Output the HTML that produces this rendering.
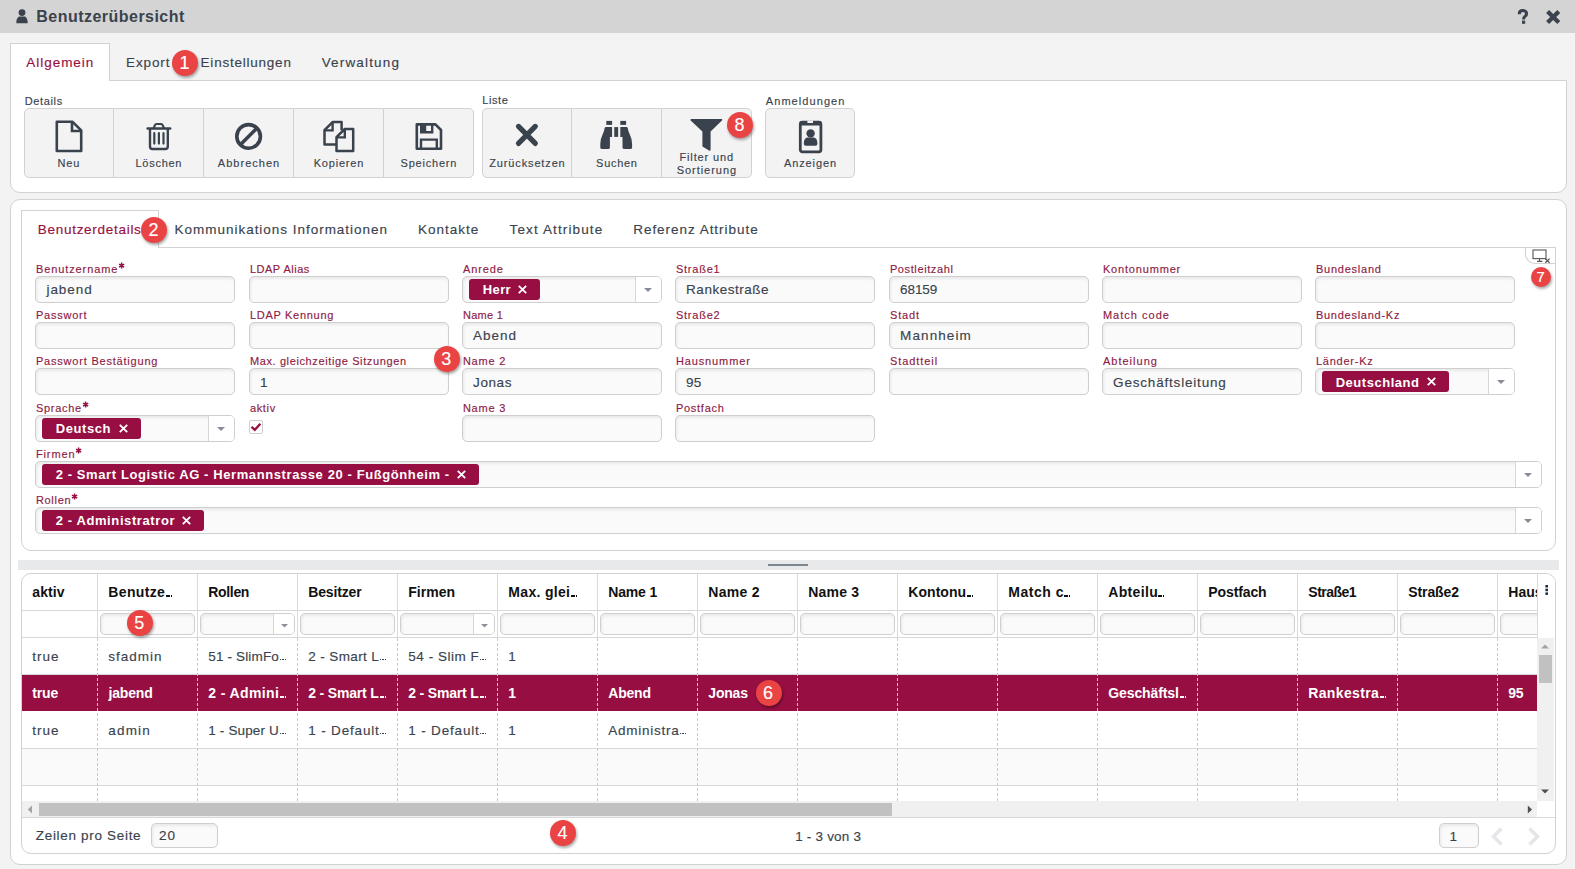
<!DOCTYPE html><html><head><meta charset="utf-8"><style>
html,body{margin:0;padding:0}
body{width:1575px;height:869px;overflow:hidden;position:relative;background:#f3f3f3;font-family:"Liberation Sans",sans-serif}
.t{position:absolute;white-space:pre;line-height:1;-webkit-text-stroke:0.15px currentColor}
svg{overflow:visible}
</style></head><body>
<div style="position:absolute;left:0px;top:0px;width:1575px;height:33px;background:#d4d4d4"></div>
<svg style="position:absolute;left:16px;top:9px" width="12" height="15" viewBox="0 0 12 15"><circle cx="6" cy="3.6" r="3.4" fill="#3a434d"/><path d="M0.3 14.2 C0.3 9.8 2 7.6 3.6 7.6 L8.4 7.6 C10 7.6 11.7 9.8 11.7 14.2 Z" fill="#3a434d"/></svg>
<div class="t" style="left:36.30px;top:9px;font-size:16px;font-weight:bold;-webkit-text-stroke:0;color:#3a434d;letter-spacing:0.472px;">Benutzerübersicht</div>
<svg style="position:absolute;left:1516.6px;top:9px" width="12" height="15" viewBox="0 0 12 15"><path d="M2.2 5.2 C2.2 2.6 3.8 1.6 5.8 1.6 C8.2 1.6 9.6 2.9 9.6 4.7 C9.6 7.4 6.6 7.5 6.6 9.8 V10.6" fill="none" stroke="#3a434d" stroke-width="3"/><rect x="5" y="11.6" width="3.2" height="3.2" fill="#3a434d"/></svg>
<svg style="position:absolute;left:1545px;top:9px" width="16" height="16" viewBox="0 0 16 16"><path d="M2.6 2.4 L13.8 13.6 M13.8 2.4 L2.6 13.6" stroke="#3a434d" stroke-width="4.2"/></svg>
<div style="position:absolute;left:10px;top:80px;width:1557px;height:113px;box-sizing:border-box;background:#fff;border:1px solid #d2d2d2;border-radius:0 0 10px 10px"></div>
<div style="position:absolute;left:10px;top:43px;width:100px;height:38px;box-sizing:border-box;background:#fff;border:1px solid #d2d2d2;border-bottom:none"></div>
<div class="t" style="left:26.30px;top:56px;font-size:13.5px;color:#970f42;letter-spacing:0.963px;">Allgemein</div>
<div class="t" style="left:126.10px;top:56px;font-size:13.5px;color:#3a434d;letter-spacing:0.860px;">Export</div>
<div class="t" style="left:200.60px;top:56px;font-size:13.5px;color:#3a434d;letter-spacing:0.771px;">Einstellungen</div>
<div class="t" style="left:321.70px;top:56px;font-size:13.5px;color:#3a434d;letter-spacing:1.156px;">Verwaltung</div>
<div class="t" style="left:24.70px;top:96px;font-size:11px;color:#3a434d;letter-spacing:0.650px;">Details</div>
<div class="t" style="left:482.30px;top:95px;font-size:11px;color:#3a434d;letter-spacing:0.562px;">Liste</div>
<div class="t" style="left:765.80px;top:96px;font-size:11px;color:#3a434d;letter-spacing:1.070px;">Anmeldungen</div>
<div style="position:absolute;left:24px;top:108px;width:450px;height:70px;box-sizing:border-box;background:#f3f3f3;border:1px solid #d2d2d2;border-radius:5px"></div>
<div style="position:absolute;left:113px;top:109px;width:1px;height:68px;background:#d2d2d2"></div>
<div style="position:absolute;left:203px;top:109px;width:1px;height:68px;background:#d2d2d2"></div>
<div style="position:absolute;left:293px;top:109px;width:1px;height:68px;background:#d2d2d2"></div>
<div style="position:absolute;left:383px;top:109px;width:1px;height:68px;background:#d2d2d2"></div>
<div style="position:absolute;left:482px;top:108px;width:270px;height:70px;box-sizing:border-box;background:#f3f3f3;border:1px solid #d2d2d2;border-radius:5px"></div>
<div style="position:absolute;left:571px;top:109px;width:1px;height:68px;background:#d2d2d2"></div>
<div style="position:absolute;left:661px;top:109px;width:1px;height:68px;background:#d2d2d2"></div>
<div style="position:absolute;left:765px;top:108px;width:90px;height:70px;box-sizing:border-box;background:#f3f3f3;border:1px solid #d2d2d2;border-radius:5px"></div>
<div class="t" style="left:57.55px;top:158px;font-size:11px;color:#3a434d;letter-spacing:0.850px;">Neu</div>
<div class="t" style="left:135.50px;top:158px;font-size:11px;color:#3a434d;letter-spacing:0.733px;">Löschen</div>
<div class="t" style="left:217.80px;top:158px;font-size:11px;color:#3a434d;letter-spacing:1.025px;">Abbrechen</div>
<div class="t" style="left:313.65px;top:158px;font-size:11px;color:#3a434d;letter-spacing:0.807px;">Kopieren</div>
<div class="t" style="left:400.60px;top:158px;font-size:11px;color:#3a434d;letter-spacing:0.781px;">Speichern</div>
<div class="t" style="left:489.25px;top:158px;font-size:11px;color:#3a434d;letter-spacing:0.859px;">Zurücksetzen</div>
<div class="t" style="left:596.10px;top:158px;font-size:11px;color:#3a434d;letter-spacing:0.700px;">Suchen</div>
<div class="t" style="left:784.00px;top:158px;font-size:11px;color:#3a434d;letter-spacing:0.879px;">Anzeigen</div>
<div class="t" style="left:679.45px;top:152px;font-size:11px;color:#3a434d;letter-spacing:0.872px;">Filter und</div>
<div class="t" style="left:676.70px;top:165px;font-size:11px;color:#3a434d;letter-spacing:0.961px;">Sortierung</div>
<svg style="position:absolute;left:55px;top:120px" width="29" height="33" viewBox="0 0 29 33"><path d="M1.8 1.8 H17.6 L26.2 10.4 V31 H1.8 Z" fill="none" stroke="#3a434d" stroke-width="2.6" stroke-linejoin="round"/><path d="M17 1.8 V11 H26.2" fill="none" stroke="#3a434d" stroke-width="2.6"/></svg>
<svg style="position:absolute;left:146px;top:122px" width="26" height="29" viewBox="0 0 26 29"><path d="M1.6 6.5 H24.2" stroke="#3a434d" stroke-width="2.4" stroke-linecap="round"/><path d="M7.6 6.4 L8.9 3.1 Q9.3 2 10.5 2 H15.1 Q16.3 2 16.7 3.1 L18 6.4" fill="none" stroke="#3a434d" stroke-width="2.2"/><path d="M4 6.8 V24.6 C4 26.2 4.8 27 6.4 27 H19.4 C21 27 21.8 26.2 21.8 24.6 V6.8" fill="none" stroke="#3a434d" stroke-width="2.4"/><path d="M8.3 11.2 V21.6 M12.9 11.2 V21.6 M17.5 11.2 V21.6" stroke="#3a434d" stroke-width="2.2" stroke-linecap="round"/></svg>
<svg style="position:absolute;left:234px;top:122px" width="29" height="29" viewBox="0 0 29 29"><circle cx="14.6" cy="14.4" r="11.8" fill="none" stroke="#3a434d" stroke-width="3.6"/><path d="M22.6 6.4 L6.6 22.4" stroke="#3a434d" stroke-width="3.6"/></svg>
<svg style="position:absolute;left:322px;top:120px" width="34" height="34" viewBox="0 0 34 34"><path d="M14 24.4 H2.5 V10.2 L10.6 2.1 H19.6 V10.2" fill="none" stroke="#3a434d" stroke-width="2.5" stroke-linejoin="round"/><path d="M2.5 10.4 H10.6 V2.1" fill="none" stroke="#3a434d" stroke-width="2.4"/><path d="M14.5 17.2 L22.8 9 H31.2 V31 H14.5 Z" fill="none" stroke="#3a434d" stroke-width="2.5" stroke-linejoin="round"/><path d="M14.5 17.4 H22.8 V9" fill="none" stroke="#3a434d" stroke-width="2.4"/></svg>
<svg style="position:absolute;left:415px;top:122px" width="28" height="29" viewBox="0 0 28 29"><path d="M1.8 2.4 H20.4 L26 8 V26.8 H1.8 Z" fill="none" stroke="#3a434d" stroke-width="2.6" stroke-linejoin="round"/><path d="M6.2 1.8 V10.2 H17.2 V1.8" fill="none" stroke="#3a434d" stroke-width="2.4"/><rect x="5.8" y="2" width="5.4" height="8.2" fill="#3a434d"/><path d="M6 26.8 V17.6 H21.8 V26.8" fill="none" stroke="#3a434d" stroke-width="2.4"/></svg>
<svg style="position:absolute;left:514px;top:122px" width="26" height="26" viewBox="0 0 26 26"><path d="M4.5 4.4 L21.3 21.4 M21.3 4.4 L4.5 21.4" stroke="#3a434d" stroke-width="5.2" stroke-linecap="round"/></svg>
<svg style="position:absolute;left:599px;top:120px" width="35" height="31" viewBox="0 0 35 31"><rect x="7.3" y="0.9" width="5.8" height="4" fill="#3a434d"/><rect x="21.3" y="0.9" width="5.8" height="4" fill="#3a434d"/><rect x="15.25" y="7.1" width="3.9" height="9.8" fill="#3a434d"/><path d="M5.6 8.2 Q5.8 7.1 7 7.1 H13.1 V16.9 H10.9 V27.6 Q10.9 28.9 9.6 28.9 H2.6 Q1.3 28.9 1.3 27.6 V24 Q1.3 19 3.6 14.6 Q5.2 11.4 5.6 8.2 Z" fill="#3a434d"/><path d="M28.8 8.2 Q28.6 7.1 27.4 7.1 H21.3 V16.9 H23.5 V27.6 Q23.5 28.9 24.8 28.9 H31.8 Q33.1 28.9 33.1 27.6 V24 Q33.1 19 30.8 14.6 Q29.2 11.4 28.8 8.2 Z" fill="#3a434d"/></svg>
<svg style="position:absolute;left:689px;top:118px" width="35" height="35" viewBox="0 0 35 35"><path d="M1.4 2.2 C1.4 1.5 2 1 2.8 1 H32.2 C33 1 33.6 1.5 33.2 2.2 L21.6 13.6 V31.6 C21.6 32.6 20.8 33 20 32.4 L13.4 28.6 V13.6 Z" fill="#3a434d"/></svg>
<svg style="position:absolute;left:798px;top:120px" width="26" height="34" viewBox="0 0 26 34"><rect x="2.3" y="2.2" width="20.6" height="29.6" rx="2" fill="none" stroke="#3a434d" stroke-width="2.8"/><rect x="2.4" y="1.2" width="20.4" height="4.2" rx="1" fill="#3a434d"/><rect x="9.4" y="0.6" width="5.6" height="2.4" fill="#f3f3f3"/><circle cx="12.6" cy="13.4" r="4.2" fill="#3a434d"/><path d="M5.8 23.8 C5.8 19.8 7.4 17.6 9.8 17.6 H15.4 C17.8 17.6 19.4 19.8 19.4 23.8 C19.4 25 18.6 25.8 17.4 25.8 H7.8 C6.6 25.8 5.8 25 5.8 23.8 Z" fill="#3a434d"/></svg>
<div style="position:absolute;left:10px;top:199px;width:1557px;height:666px;box-sizing:border-box;background:#fff;border:1px solid #d2d2d2;border-radius:10px"></div>
<div style="position:absolute;left:21px;top:247px;width:1535px;height:304px;box-sizing:border-box;background:#fff;border:1px solid #d2d2d2;border-radius:0 0 10px 10px"></div>
<div style="position:absolute;left:21px;top:210px;width:138px;height:38px;box-sizing:border-box;background:#fff;border:1px solid #d2d2d2;border-bottom:none"></div>
<div class="t" style="left:37.80px;top:223px;font-size:13.5px;color:#970f42;letter-spacing:0.714px;">Benutzerdetails</div>
<div class="t" style="left:174.60px;top:223px;font-size:13.5px;color:#3a434d;letter-spacing:0.974px;">Kommunikations Informationen</div>
<div class="t" style="left:418.10px;top:223px;font-size:13.5px;color:#3a434d;letter-spacing:0.986px;">Kontakte</div>
<div class="t" style="left:509.50px;top:223px;font-size:13.5px;color:#3a434d;letter-spacing:1.127px;">Text Attribute</div>
<div class="t" style="left:633.20px;top:223px;font-size:13.5px;color:#3a434d;letter-spacing:0.968px;">Referenz Attribute</div>
<div style="position:absolute;left:1525px;top:248px;width:30px;height:16px;box-sizing:border-box;background:#fff;border-left:1px solid #d2d2d2;border-bottom:1px solid #d2d2d2;border-bottom-left-radius:10px"></div>
<svg style="position:absolute;left:1532px;top:249px" width="20" height="15" viewBox="0 0 20 15"><rect x="1" y="1" width="13" height="8.6" fill="none" stroke="#555" stroke-width="1.1"/><path d="M5 12.4 H10.4 M7.6 9.6 V12.4" stroke="#555" stroke-width="1.1"/><path d="M13.2 9.6 L17.6 13.8 M17.6 9.6 L13.2 13.8" stroke="#555" stroke-width="1.3"/></svg>
<div class="t" style="left:35.90px;top:264px;font-size:11px;color:#8e1a43;letter-spacing:0.905px;">Benutzername</div>
<svg style="position:absolute;left:118px;top:262px" width="8" height="8" viewBox="0 0 8 8"><path d="M3.6 0.6 V6.6 M1 2.1 L6.2 5.1 M6.2 2.1 L1 5.1" stroke="#970f42" stroke-width="1.5"/></svg>
<div style="position:absolute;left:35px;top:276px;width:200px;height:27px;box-sizing:border-box;background:#fafafa;border:1px solid #cfcfcf;border-radius:5px;box-shadow:inset 1px 2px 3px rgba(0,0,0,0.07)"></div>
<div class="t" style="left:46.45px;top:283px;font-size:13.5px;color:#3a434d;letter-spacing:0.940px;">jabend</div>
<div class="t" style="left:249.90px;top:264px;font-size:11px;color:#8e1a43;letter-spacing:0.506px;">LDAP Alias</div>
<div style="position:absolute;left:249px;top:276px;width:200px;height:27px;box-sizing:border-box;background:#fafafa;border:1px solid #cfcfcf;border-radius:5px;box-shadow:inset 1px 2px 3px rgba(0,0,0,0.07)"></div>
<div class="t" style="left:462.90px;top:264px;font-size:11px;color:#8e1a43;letter-spacing:0.910px;">Anrede</div>
<div style="position:absolute;left:462px;top:276px;width:200px;height:27px;box-sizing:border-box;background:#fafafa;border:1px solid #cfcfcf;border-radius:5px;box-shadow:inset 1px 2px 3px rgba(0,0,0,0.07)"></div>
<div style="position:absolute;left:635px;top:277px;width:26px;height:25px;background:#fff;border-top-right-radius:4px;border-bottom-right-radius:4px"></div>
<div style="position:absolute;left:635px;top:277px;width:1px;height:25px;background:#d6d6d6"></div>
<svg style="position:absolute;left:644px;top:288px" width="9" height="5" viewBox="0 0 9 5"><path d="M0 0 H8 L4 4 Z" fill="#858c95"/></svg>
<div style="position:absolute;left:469px;top:279px;width:71px;height:21px;background:#970f42;border-radius:3px"></div>
<div class="t" style="left:482.70px;top:283px;font-size:13px;font-weight:bold;-webkit-text-stroke:0;color:#fff;letter-spacing:0.417px;">Herr</div>
<svg style="position:absolute;left:518px;top:285px" width="9" height="9" viewBox="0 0 9 9"><path d="M0.8 0.8 L8.2 8.2 M8.2 0.8 L0.8 8.2" stroke="#fff" stroke-width="1.8"/></svg>
<div class="t" style="left:675.90px;top:264px;font-size:11px;color:#8e1a43;letter-spacing:0.783px;">Straße1</div>
<div style="position:absolute;left:675px;top:276px;width:200px;height:27px;box-sizing:border-box;background:#fafafa;border:1px solid #cfcfcf;border-radius:5px;box-shadow:inset 1px 2px 3px rgba(0,0,0,0.07)"></div>
<div class="t" style="left:686.10px;top:283px;font-size:13.5px;color:#3a434d;letter-spacing:0.520px;">Rankestraße</div>
<div class="t" style="left:889.90px;top:264px;font-size:11px;color:#8e1a43;letter-spacing:0.614px;">Postleitzahl</div>
<div style="position:absolute;left:889px;top:276px;width:200px;height:27px;box-sizing:border-box;background:#fafafa;border:1px solid #cfcfcf;border-radius:5px;box-shadow:inset 1px 2px 3px rgba(0,0,0,0.07)"></div>
<div class="t" style="left:900.10px;top:283px;font-size:13.5px;color:#3a434d;letter-spacing:-0.112px;">68159</div>
<div class="t" style="left:1102.90px;top:264px;font-size:11px;color:#8e1a43;letter-spacing:0.829px;">Kontonummer</div>
<div style="position:absolute;left:1102px;top:276px;width:200px;height:27px;box-sizing:border-box;background:#fafafa;border:1px solid #cfcfcf;border-radius:5px;box-shadow:inset 1px 2px 3px rgba(0,0,0,0.07)"></div>
<div class="t" style="left:1315.90px;top:264px;font-size:11px;color:#8e1a43;letter-spacing:0.775px;">Bundesland</div>
<div style="position:absolute;left:1315px;top:276px;width:200px;height:27px;box-sizing:border-box;background:#fafafa;border:1px solid #cfcfcf;border-radius:5px;box-shadow:inset 1px 2px 3px rgba(0,0,0,0.07)"></div>
<div class="t" style="left:35.90px;top:310px;font-size:11px;color:#8e1a43;letter-spacing:0.776px;">Passwort</div>
<div style="position:absolute;left:35px;top:322px;width:200px;height:27px;box-sizing:border-box;background:#fafafa;border:1px solid #cfcfcf;border-radius:5px;box-shadow:inset 1px 2px 3px rgba(0,0,0,0.07)"></div>
<div class="t" style="left:249.90px;top:310px;font-size:11px;color:#8e1a43;letter-spacing:0.714px;">LDAP Kennung</div>
<div style="position:absolute;left:249px;top:322px;width:200px;height:27px;box-sizing:border-box;background:#fafafa;border:1px solid #cfcfcf;border-radius:5px;box-shadow:inset 1px 2px 3px rgba(0,0,0,0.07)"></div>
<div class="t" style="left:462.90px;top:310px;font-size:11px;color:#8e1a43;letter-spacing:0.300px;">Name 1</div>
<div style="position:absolute;left:462px;top:322px;width:200px;height:27px;box-sizing:border-box;background:#fafafa;border:1px solid #cfcfcf;border-radius:5px;box-shadow:inset 1px 2px 3px rgba(0,0,0,0.07)"></div>
<div class="t" style="left:473.10px;top:329px;font-size:13.5px;color:#3a434d;letter-spacing:0.988px;">Abend</div>
<div class="t" style="left:675.90px;top:310px;font-size:11px;color:#8e1a43;letter-spacing:0.783px;">Straße2</div>
<div style="position:absolute;left:675px;top:322px;width:200px;height:27px;box-sizing:border-box;background:#fafafa;border:1px solid #cfcfcf;border-radius:5px;box-shadow:inset 1px 2px 3px rgba(0,0,0,0.07)"></div>
<div class="t" style="left:889.90px;top:310px;font-size:11px;color:#8e1a43;letter-spacing:0.900px;">Stadt</div>
<div style="position:absolute;left:889px;top:322px;width:200px;height:27px;box-sizing:border-box;background:#fafafa;border:1px solid #cfcfcf;border-radius:5px;box-shadow:inset 1px 2px 3px rgba(0,0,0,0.07)"></div>
<div class="t" style="left:900.10px;top:329px;font-size:13.5px;color:#3a434d;letter-spacing:1.093px;">Mannheim</div>
<div class="t" style="left:1102.90px;top:310px;font-size:11px;color:#8e1a43;letter-spacing:1.017px;">Match code</div>
<div style="position:absolute;left:1102px;top:322px;width:200px;height:27px;box-sizing:border-box;background:#fafafa;border:1px solid #cfcfcf;border-radius:5px;box-shadow:inset 1px 2px 3px rgba(0,0,0,0.07)"></div>
<div class="t" style="left:1315.90px;top:310px;font-size:11px;color:#8e1a43;letter-spacing:0.746px;">Bundesland-Kz</div>
<div style="position:absolute;left:1315px;top:322px;width:200px;height:27px;box-sizing:border-box;background:#fafafa;border:1px solid #cfcfcf;border-radius:5px;box-shadow:inset 1px 2px 3px rgba(0,0,0,0.07)"></div>
<div class="t" style="left:35.90px;top:356px;font-size:11px;color:#8e1a43;letter-spacing:0.800px;">Passwort Bestätigung</div>
<div style="position:absolute;left:35px;top:368px;width:200px;height:27px;box-sizing:border-box;background:#fafafa;border:1px solid #cfcfcf;border-radius:5px;box-shadow:inset 1px 2px 3px rgba(0,0,0,0.07)"></div>
<div class="t" style="left:249.90px;top:356px;font-size:11px;color:#8e1a43;letter-spacing:0.620px;">Max. gleichzeitige Sitzungen</div>
<div style="position:absolute;left:249px;top:368px;width:200px;height:27px;box-sizing:border-box;background:#fafafa;border:1px solid #cfcfcf;border-radius:5px;box-shadow:inset 1px 2px 3px rgba(0,0,0,0.07)"></div>
<div class="t" style="left:260.10px;top:376px;font-size:13.5px;color:#3a434d;letter-spacing:0.000px;">1</div>
<div class="t" style="left:462.90px;top:356px;font-size:11px;color:#8e1a43;letter-spacing:0.780px;">Name 2</div>
<div style="position:absolute;left:462px;top:368px;width:200px;height:27px;box-sizing:border-box;background:#fafafa;border:1px solid #cfcfcf;border-radius:5px;box-shadow:inset 1px 2px 3px rgba(0,0,0,0.07)"></div>
<div class="t" style="left:473.10px;top:376px;font-size:13.5px;color:#3a434d;letter-spacing:0.575px;">Jonas</div>
<div class="t" style="left:675.90px;top:356px;font-size:11px;color:#8e1a43;letter-spacing:0.880px;">Hausnummer</div>
<div style="position:absolute;left:675px;top:368px;width:200px;height:27px;box-sizing:border-box;background:#fafafa;border:1px solid #cfcfcf;border-radius:5px;box-shadow:inset 1px 2px 3px rgba(0,0,0,0.07)"></div>
<div class="t" style="left:686.10px;top:376px;font-size:13.5px;color:#3a434d;letter-spacing:0.200px;">95</div>
<div class="t" style="left:889.90px;top:356px;font-size:11px;color:#8e1a43;letter-spacing:0.944px;">Stadtteil</div>
<div style="position:absolute;left:889px;top:368px;width:200px;height:27px;box-sizing:border-box;background:#fafafa;border:1px solid #cfcfcf;border-radius:5px;box-shadow:inset 1px 2px 3px rgba(0,0,0,0.07)"></div>
<div class="t" style="left:1102.90px;top:356px;font-size:11px;color:#8e1a43;letter-spacing:1.019px;">Abteilung</div>
<div style="position:absolute;left:1102px;top:368px;width:200px;height:27px;box-sizing:border-box;background:#fafafa;border:1px solid #cfcfcf;border-radius:5px;box-shadow:inset 1px 2px 3px rgba(0,0,0,0.07)"></div>
<div class="t" style="left:1113.10px;top:376px;font-size:13.5px;color:#3a434d;letter-spacing:0.810px;">Geschäftsleitung</div>
<div class="t" style="left:1315.90px;top:356px;font-size:11px;color:#8e1a43;letter-spacing:0.761px;">Länder-Kz</div>
<div style="position:absolute;left:1315px;top:368px;width:200px;height:27px;box-sizing:border-box;background:#fafafa;border:1px solid #cfcfcf;border-radius:5px;box-shadow:inset 1px 2px 3px rgba(0,0,0,0.07)"></div>
<div style="position:absolute;left:1488px;top:369px;width:26px;height:25px;background:#fff;border-top-right-radius:4px;border-bottom-right-radius:4px"></div>
<div style="position:absolute;left:1488px;top:369px;width:1px;height:25px;background:#d6d6d6"></div>
<svg style="position:absolute;left:1497px;top:380px" width="9" height="5" viewBox="0 0 9 5"><path d="M0 0 H8 L4 4 Z" fill="#858c95"/></svg>
<div style="position:absolute;left:1322px;top:371px;width:127px;height:21px;background:#970f42;border-radius:3px"></div>
<div class="t" style="left:1335.70px;top:376px;font-size:13px;font-weight:bold;-webkit-text-stroke:0;color:#fff;letter-spacing:0.530px;">Deutschland</div>
<svg style="position:absolute;left:1427px;top:377px" width="9" height="9" viewBox="0 0 9 9"><path d="M0.8 0.8 L8.2 8.2 M8.2 0.8 L0.8 8.2" stroke="#fff" stroke-width="1.8"/></svg>
<div class="t" style="left:35.90px;top:403px;font-size:11px;color:#8e1a43;letter-spacing:0.708px;">Sprache</div>
<svg style="position:absolute;left:82px;top:401px" width="8" height="8" viewBox="0 0 8 8"><path d="M3.6 0.6 V6.6 M1 2.1 L6.2 5.1 M6.2 2.1 L1 5.1" stroke="#970f42" stroke-width="1.5"/></svg>
<div style="position:absolute;left:35px;top:415px;width:200px;height:27px;box-sizing:border-box;background:#fafafa;border:1px solid #cfcfcf;border-radius:5px;box-shadow:inset 1px 2px 3px rgba(0,0,0,0.07)"></div>
<div style="position:absolute;left:208px;top:416px;width:26px;height:25px;background:#fff;border-top-right-radius:4px;border-bottom-right-radius:4px"></div>
<div style="position:absolute;left:208px;top:416px;width:1px;height:25px;background:#d6d6d6"></div>
<svg style="position:absolute;left:217px;top:427px" width="9" height="5" viewBox="0 0 9 5"><path d="M0 0 H8 L4 4 Z" fill="#858c95"/></svg>
<div style="position:absolute;left:42px;top:418px;width:99px;height:21px;background:#970f42;border-radius:3px"></div>
<div class="t" style="left:55.70px;top:422px;font-size:13px;font-weight:bold;-webkit-text-stroke:0;color:#fff;letter-spacing:0.583px;">Deutsch</div>
<svg style="position:absolute;left:119px;top:424px" width="9" height="9" viewBox="0 0 9 9"><path d="M0.8 0.8 L8.2 8.2 M8.2 0.8 L0.8 8.2" stroke="#fff" stroke-width="1.8"/></svg>
<div class="t" style="left:249.90px;top:403px;font-size:11px;color:#8e1a43;letter-spacing:0.678px;">aktiv</div>
<div style="position:absolute;left:249px;top:420px;width:14px;height:14px;box-sizing:border-box;background:#fff;border:1px solid #cfcfcf;border-radius:2px"></div>
<svg style="position:absolute;left:250px;top:422px" width="12" height="10" viewBox="0 0 12 10"><path d="M2.4 5.6 L4.8 7.8 L9.6 2.6" fill="none" stroke="#970f42" stroke-width="2.3" stroke-linecap="square"/></svg>
<div class="t" style="left:462.90px;top:403px;font-size:11px;color:#8e1a43;letter-spacing:0.780px;">Name 3</div>
<div style="position:absolute;left:462px;top:415px;width:200px;height:27px;box-sizing:border-box;background:#fafafa;border:1px solid #cfcfcf;border-radius:5px;box-shadow:inset 1px 2px 3px rgba(0,0,0,0.07)"></div>
<div class="t" style="left:675.90px;top:403px;font-size:11px;color:#8e1a43;letter-spacing:0.734px;">Postfach</div>
<div style="position:absolute;left:675px;top:415px;width:200px;height:27px;box-sizing:border-box;background:#fafafa;border:1px solid #cfcfcf;border-radius:5px;box-shadow:inset 1px 2px 3px rgba(0,0,0,0.07)"></div>
<div class="t" style="left:35.90px;top:449px;font-size:11px;color:#8e1a43;letter-spacing:0.890px;">Firmen</div>
<svg style="position:absolute;left:75px;top:447px" width="8" height="8" viewBox="0 0 8 8"><path d="M3.6 0.6 V6.6 M1 2.1 L6.2 5.1 M6.2 2.1 L1 5.1" stroke="#970f42" stroke-width="1.5"/></svg>
<div style="position:absolute;left:35px;top:461px;width:1507px;height:27px;box-sizing:border-box;background:#fafafa;border:1px solid #cfcfcf;border-radius:5px;box-shadow:inset 1px 2px 3px rgba(0,0,0,0.07)"></div>
<div style="position:absolute;left:1515px;top:462px;width:26px;height:25px;background:#fff;border-top-right-radius:4px;border-bottom-right-radius:4px"></div>
<div style="position:absolute;left:1515px;top:462px;width:1px;height:25px;background:#d6d6d6"></div>
<svg style="position:absolute;left:1524px;top:473px" width="9" height="5" viewBox="0 0 9 5"><path d="M0 0 H8 L4 4 Z" fill="#858c95"/></svg>
<div style="position:absolute;left:42px;top:464px;width:437px;height:21px;background:#970f42;border-radius:3px"></div>
<div class="t" style="left:55.70px;top:468px;font-size:13px;font-weight:bold;-webkit-text-stroke:0;color:#fff;letter-spacing:0.595px;">2 - Smart Logistic AG - Hermannstrasse 20 - Fußgönheim -</div>
<svg style="position:absolute;left:457px;top:470px" width="9" height="9" viewBox="0 0 9 9"><path d="M0.8 0.8 L8.2 8.2 M8.2 0.8 L0.8 8.2" stroke="#fff" stroke-width="1.8"/></svg>
<div class="t" style="left:35.90px;top:495px;font-size:11px;color:#8e1a43;letter-spacing:0.700px;">Rollen</div>
<svg style="position:absolute;left:71px;top:493px" width="8" height="8" viewBox="0 0 8 8"><path d="M3.6 0.6 V6.6 M1 2.1 L6.2 5.1 M6.2 2.1 L1 5.1" stroke="#970f42" stroke-width="1.5"/></svg>
<div style="position:absolute;left:35px;top:507px;width:1507px;height:27px;box-sizing:border-box;background:#fafafa;border:1px solid #cfcfcf;border-radius:5px;box-shadow:inset 1px 2px 3px rgba(0,0,0,0.07)"></div>
<div style="position:absolute;left:1515px;top:508px;width:26px;height:25px;background:#fff;border-top-right-radius:4px;border-bottom-right-radius:4px"></div>
<div style="position:absolute;left:1515px;top:508px;width:1px;height:25px;background:#d6d6d6"></div>
<svg style="position:absolute;left:1524px;top:519px" width="9" height="5" viewBox="0 0 9 5"><path d="M0 0 H8 L4 4 Z" fill="#858c95"/></svg>
<div style="position:absolute;left:42px;top:510px;width:162px;height:21px;background:#970f42;border-radius:3px"></div>
<div class="t" style="left:55.70px;top:514px;font-size:13px;font-weight:bold;-webkit-text-stroke:0;color:#fff;letter-spacing:0.606px;">2 - Administratror</div>
<svg style="position:absolute;left:182px;top:516px" width="9" height="9" viewBox="0 0 9 9"><path d="M0.8 0.8 L8.2 8.2 M8.2 0.8 L0.8 8.2" stroke="#fff" stroke-width="1.8"/></svg>
<div style="position:absolute;left:18px;top:560px;width:1541px;height:10px;background:#e8e9eb"></div>
<div style="position:absolute;left:768px;top:564px;width:40px;height:2px;background:#7b868e"></div>
<div style="position:absolute;left:21px;top:573px;width:1535px;height:281px;box-sizing:border-box;background:#fff;border:1px solid #d2d2d2;border-radius:10px;overflow:hidden"></div>
<div style="position:absolute;left:22px;top:675px;width:1515px;height:36px;background:#970f42"></div>
<div style="position:absolute;left:22px;top:748px;width:1515px;height:37px;background:#fafafa"></div>
<div style="position:absolute;left:22px;top:610px;width:1515px;height:1px;background:#d9d9d9"></div>
<div style="position:absolute;left:22px;top:637px;width:1515px;height:1px;background:#d9d9d9"></div>
<div style="position:absolute;left:22px;top:674px;width:1515px;height:1px;background:#d9d9d9"></div>
<div style="position:absolute;left:22px;top:748px;width:1515px;height:1px;background:#d9d9d9"></div>
<div style="position:absolute;left:22px;top:785px;width:1515px;height:1px;background:#d9d9d9"></div>
<div style="position:absolute;left:97px;top:574px;width:1px;height:64px;background:#dadada"></div>
<div style="position:absolute;left:197px;top:574px;width:1px;height:64px;background:#dadada"></div>
<div style="position:absolute;left:297px;top:574px;width:1px;height:64px;background:#dadada"></div>
<div style="position:absolute;left:397px;top:574px;width:1px;height:64px;background:#dadada"></div>
<div style="position:absolute;left:497px;top:574px;width:1px;height:64px;background:#dadada"></div>
<div style="position:absolute;left:597px;top:574px;width:1px;height:64px;background:#dadada"></div>
<div style="position:absolute;left:697px;top:574px;width:1px;height:64px;background:#dadada"></div>
<div style="position:absolute;left:797px;top:574px;width:1px;height:64px;background:#dadada"></div>
<div style="position:absolute;left:897px;top:574px;width:1px;height:64px;background:#dadada"></div>
<div style="position:absolute;left:997px;top:574px;width:1px;height:64px;background:#dadada"></div>
<div style="position:absolute;left:1097px;top:574px;width:1px;height:64px;background:#dadada"></div>
<div style="position:absolute;left:1197px;top:574px;width:1px;height:64px;background:#dadada"></div>
<div style="position:absolute;left:1297px;top:574px;width:1px;height:64px;background:#dadada"></div>
<div style="position:absolute;left:1397px;top:574px;width:1px;height:64px;background:#dadada"></div>
<div style="position:absolute;left:1497px;top:574px;width:1px;height:64px;background:#dadada"></div>
<div style="position:absolute;left:97px;top:638px;width:0;height:163px;border-left:1px dashed #c8c8c8"></div>
<div style="position:absolute;left:197px;top:638px;width:0;height:163px;border-left:1px dashed #c8c8c8"></div>
<div style="position:absolute;left:297px;top:638px;width:0;height:163px;border-left:1px dashed #c8c8c8"></div>
<div style="position:absolute;left:397px;top:638px;width:0;height:163px;border-left:1px dashed #c8c8c8"></div>
<div style="position:absolute;left:497px;top:638px;width:0;height:163px;border-left:1px dashed #c8c8c8"></div>
<div style="position:absolute;left:597px;top:638px;width:0;height:163px;border-left:1px dashed #c8c8c8"></div>
<div style="position:absolute;left:697px;top:638px;width:0;height:163px;border-left:1px dashed #c8c8c8"></div>
<div style="position:absolute;left:797px;top:638px;width:0;height:163px;border-left:1px dashed #c8c8c8"></div>
<div style="position:absolute;left:897px;top:638px;width:0;height:163px;border-left:1px dashed #c8c8c8"></div>
<div style="position:absolute;left:997px;top:638px;width:0;height:163px;border-left:1px dashed #c8c8c8"></div>
<div style="position:absolute;left:1097px;top:638px;width:0;height:163px;border-left:1px dashed #c8c8c8"></div>
<div style="position:absolute;left:1197px;top:638px;width:0;height:163px;border-left:1px dashed #c8c8c8"></div>
<div style="position:absolute;left:1297px;top:638px;width:0;height:163px;border-left:1px dashed #c8c8c8"></div>
<div style="position:absolute;left:1397px;top:638px;width:0;height:163px;border-left:1px dashed #c8c8c8"></div>
<div style="position:absolute;left:1497px;top:638px;width:0;height:163px;border-left:1px dashed #c8c8c8"></div>
<div class="t" style="left:32.30px;top:585px;font-size:14px;font-weight:bold;-webkit-text-stroke:0;color:#111;letter-spacing:0.075px;">aktiv</div>
<div class="t" style="left:108.30px;top:585px;font-size:14px;font-weight:bold;-webkit-text-stroke:0;color:#111;letter-spacing:0.358px;">Benutze</div>
<div style="position:absolute;left:166.0px;top:595px;width:1.7px;height:1.7px;background:#111"></div>
<div style="position:absolute;left:168.3px;top:595px;width:1.7px;height:1.7px;background:#111"></div>
<div style="position:absolute;left:170.6px;top:595px;width:1.7px;height:1.7px;background:#111"></div>
<div class="t" style="left:208.30px;top:585px;font-size:14px;font-weight:bold;-webkit-text-stroke:0;color:#111;letter-spacing:-0.340px;">Rollen</div>
<div class="t" style="left:308.30px;top:585px;font-size:14px;font-weight:bold;-webkit-text-stroke:0;color:#111;letter-spacing:-0.164px;">Besitzer</div>
<div class="t" style="left:408.30px;top:585px;font-size:14px;font-weight:bold;-webkit-text-stroke:0;color:#111;letter-spacing:0.000px;">Firmen</div>
<div class="t" style="left:508.30px;top:585px;font-size:14px;font-weight:bold;-webkit-text-stroke:0;color:#111;letter-spacing:0.319px;">Max. glei</div>
<div style="position:absolute;left:571.0px;top:595px;width:1.7px;height:1.7px;background:#111"></div>
<div style="position:absolute;left:573.3px;top:595px;width:1.7px;height:1.7px;background:#111"></div>
<div style="position:absolute;left:575.6px;top:595px;width:1.7px;height:1.7px;background:#111"></div>
<div class="t" style="left:608.30px;top:585px;font-size:14px;font-weight:bold;-webkit-text-stroke:0;color:#111;letter-spacing:-0.180px;">Name 1</div>
<div class="t" style="left:708.30px;top:585px;font-size:14px;font-weight:bold;-webkit-text-stroke:0;color:#111;letter-spacing:0.300px;">Name 2</div>
<div class="t" style="left:808.30px;top:585px;font-size:14px;font-weight:bold;-webkit-text-stroke:0;color:#111;letter-spacing:0.180px;">Name 3</div>
<div class="t" style="left:908.30px;top:585px;font-size:14px;font-weight:bold;-webkit-text-stroke:0;color:#111;letter-spacing:0.042px;">Kontonu</div>
<div style="position:absolute;left:967.0px;top:595px;width:1.7px;height:1.7px;background:#111"></div>
<div style="position:absolute;left:969.3px;top:595px;width:1.7px;height:1.7px;background:#111"></div>
<div style="position:absolute;left:971.6px;top:595px;width:1.7px;height:1.7px;background:#111"></div>
<div class="t" style="left:1008.30px;top:585px;font-size:14px;font-weight:bold;-webkit-text-stroke:0;color:#111;letter-spacing:0.517px;">Match c</div>
<div style="position:absolute;left:1064.0px;top:595px;width:1.7px;height:1.7px;background:#111"></div>
<div style="position:absolute;left:1066.3px;top:595px;width:1.7px;height:1.7px;background:#111"></div>
<div style="position:absolute;left:1068.6px;top:595px;width:1.7px;height:1.7px;background:#111"></div>
<div class="t" style="left:1108.30px;top:585px;font-size:14px;font-weight:bold;-webkit-text-stroke:0;color:#111;letter-spacing:0.325px;">Abteilu</div>
<div style="position:absolute;left:1158.0px;top:595px;width:1.7px;height:1.7px;background:#111"></div>
<div style="position:absolute;left:1160.3px;top:595px;width:1.7px;height:1.7px;background:#111"></div>
<div style="position:absolute;left:1162.6px;top:595px;width:1.7px;height:1.7px;background:#111"></div>
<div class="t" style="left:1208.30px;top:585px;font-size:14px;font-weight:bold;-webkit-text-stroke:0;color:#111;letter-spacing:-0.114px;">Postfach</div>
<div class="t" style="left:1308.30px;top:585px;font-size:14px;font-weight:bold;-webkit-text-stroke:0;color:#111;letter-spacing:-0.508px;">Straße1</div>
<div class="t" style="left:1408.30px;top:585px;font-size:14px;font-weight:bold;-webkit-text-stroke:0;color:#111;letter-spacing:-0.108px;">Straße2</div>
<div class="t" style="left:1508.30px;top:585px;font-size:14px;font-weight:bold;-webkit-text-stroke:0;color:#111;letter-spacing:0.000px;">Haus</div>
<div style="position:absolute;left:100px;top:613px;width:95px;height:22px;box-sizing:border-box;background:#fafafa;border:1px solid #cfcfcf;border-radius:5px;box-shadow:inset 1px 2px 3px rgba(0,0,0,0.07)"></div>
<div style="position:absolute;left:200px;top:613px;width:95px;height:22px;box-sizing:border-box;background:#fafafa;border:1px solid #cfcfcf;border-radius:5px;box-shadow:inset 1px 2px 3px rgba(0,0,0,0.07)"></div>
<div style="position:absolute;left:273px;top:614px;width:1px;height:20px;background:#d6d6d6"></div>
<div style="position:absolute;left:274px;top:614px;width:20px;height:20px;background:#fff;border-radius:0 4px 4px 0"></div>
<svg style="position:absolute;left:281px;top:624px" width="8" height="4" viewBox="0 0 8 4"><path d="M0 0 H7 L3.5 3.5 Z" fill="#8a9199"/></svg>
<div style="position:absolute;left:300px;top:613px;width:95px;height:22px;box-sizing:border-box;background:#fafafa;border:1px solid #cfcfcf;border-radius:5px;box-shadow:inset 1px 2px 3px rgba(0,0,0,0.07)"></div>
<div style="position:absolute;left:400px;top:613px;width:95px;height:22px;box-sizing:border-box;background:#fafafa;border:1px solid #cfcfcf;border-radius:5px;box-shadow:inset 1px 2px 3px rgba(0,0,0,0.07)"></div>
<div style="position:absolute;left:473px;top:614px;width:1px;height:20px;background:#d6d6d6"></div>
<div style="position:absolute;left:474px;top:614px;width:20px;height:20px;background:#fff;border-radius:0 4px 4px 0"></div>
<svg style="position:absolute;left:481px;top:624px" width="8" height="4" viewBox="0 0 8 4"><path d="M0 0 H7 L3.5 3.5 Z" fill="#8a9199"/></svg>
<div style="position:absolute;left:500px;top:613px;width:95px;height:22px;box-sizing:border-box;background:#fafafa;border:1px solid #cfcfcf;border-radius:5px;box-shadow:inset 1px 2px 3px rgba(0,0,0,0.07)"></div>
<div style="position:absolute;left:600px;top:613px;width:95px;height:22px;box-sizing:border-box;background:#fafafa;border:1px solid #cfcfcf;border-radius:5px;box-shadow:inset 1px 2px 3px rgba(0,0,0,0.07)"></div>
<div style="position:absolute;left:700px;top:613px;width:95px;height:22px;box-sizing:border-box;background:#fafafa;border:1px solid #cfcfcf;border-radius:5px;box-shadow:inset 1px 2px 3px rgba(0,0,0,0.07)"></div>
<div style="position:absolute;left:800px;top:613px;width:95px;height:22px;box-sizing:border-box;background:#fafafa;border:1px solid #cfcfcf;border-radius:5px;box-shadow:inset 1px 2px 3px rgba(0,0,0,0.07)"></div>
<div style="position:absolute;left:900px;top:613px;width:95px;height:22px;box-sizing:border-box;background:#fafafa;border:1px solid #cfcfcf;border-radius:5px;box-shadow:inset 1px 2px 3px rgba(0,0,0,0.07)"></div>
<div style="position:absolute;left:1000px;top:613px;width:95px;height:22px;box-sizing:border-box;background:#fafafa;border:1px solid #cfcfcf;border-radius:5px;box-shadow:inset 1px 2px 3px rgba(0,0,0,0.07)"></div>
<div style="position:absolute;left:1100px;top:613px;width:95px;height:22px;box-sizing:border-box;background:#fafafa;border:1px solid #cfcfcf;border-radius:5px;box-shadow:inset 1px 2px 3px rgba(0,0,0,0.07)"></div>
<div style="position:absolute;left:1200px;top:613px;width:95px;height:22px;box-sizing:border-box;background:#fafafa;border:1px solid #cfcfcf;border-radius:5px;box-shadow:inset 1px 2px 3px rgba(0,0,0,0.07)"></div>
<div style="position:absolute;left:1300px;top:613px;width:95px;height:22px;box-sizing:border-box;background:#fafafa;border:1px solid #cfcfcf;border-radius:5px;box-shadow:inset 1px 2px 3px rgba(0,0,0,0.07)"></div>
<div style="position:absolute;left:1400px;top:613px;width:95px;height:22px;box-sizing:border-box;background:#fafafa;border:1px solid #cfcfcf;border-radius:5px;box-shadow:inset 1px 2px 3px rgba(0,0,0,0.07)"></div>
<div style="position:absolute;left:1500px;top:613px;width:45px;height:22px;box-sizing:border-box;background:#fafafa;border:1px solid #cfcfcf;border-radius:5px;box-shadow:inset 1px 2px 3px rgba(0,0,0,0.07)"></div>
<div style="position:absolute;left:1537px;top:574px;width:18px;height:64px;background:#fff;border-top-right-radius:9px"></div>
<div style="position:absolute;left:1537px;top:574px;width:1px;height:64px;background:#dadada"></div>
<svg style="position:absolute;left:1544.6px;top:585px" width="4" height="11" viewBox="0 0 4 11"><rect x="0.4" y="0" width="2.6" height="2.5" fill="#1d2a44"/><rect x="0.4" y="3.7" width="2.6" height="2.5" fill="#1d2a44"/><rect x="0.4" y="7.4" width="2.6" height="2.5" fill="#1d2a44"/></svg>
<div class="t" style="left:32.30px;top:650px;font-size:13.5px;color:#3a434d;letter-spacing:0.982px;">true</div>
<div class="t" style="left:108.30px;top:650px;font-size:13.5px;color:#3a434d;letter-spacing:0.997px;">sfadmin</div>
<div class="t" style="left:208.30px;top:650px;font-size:13.5px;color:#3a434d;letter-spacing:0.150px;">51 - SlimFo</div>
<div style="position:absolute;left:280.0px;top:659px;width:1.4px;height:1.4px;background:#3a434d"></div>
<div style="position:absolute;left:282.3px;top:659px;width:1.4px;height:1.4px;background:#3a434d"></div>
<div style="position:absolute;left:284.6px;top:659px;width:1.4px;height:1.4px;background:#3a434d"></div>
<div class="t" style="left:308.30px;top:650px;font-size:13.5px;color:#3a434d;letter-spacing:0.375px;">2 - Smart L</div>
<div style="position:absolute;left:380.0px;top:659px;width:1.4px;height:1.4px;background:#3a434d"></div>
<div style="position:absolute;left:382.3px;top:659px;width:1.4px;height:1.4px;background:#3a434d"></div>
<div style="position:absolute;left:384.6px;top:659px;width:1.4px;height:1.4px;background:#3a434d"></div>
<div class="t" style="left:408.30px;top:650px;font-size:13.5px;color:#3a434d;letter-spacing:0.525px;">54 - Slim F</div>
<div style="position:absolute;left:480.0px;top:659px;width:1.4px;height:1.4px;background:#3a434d"></div>
<div style="position:absolute;left:482.3px;top:659px;width:1.4px;height:1.4px;background:#3a434d"></div>
<div style="position:absolute;left:484.6px;top:659px;width:1.4px;height:1.4px;background:#3a434d"></div>
<div class="t" style="left:508.30px;top:650px;font-size:13.5px;color:#3a434d;letter-spacing:0.000px;">1</div>
<div class="t" style="left:32.30px;top:686px;font-size:14px;font-weight:bold;-webkit-text-stroke:0;color:#fff;letter-spacing:-0.176px;">true</div>
<div class="t" style="left:108.55px;top:686px;font-size:14px;font-weight:bold;-webkit-text-stroke:0;color:#fff;letter-spacing:-0.181px;">jabend</div>
<div class="t" style="left:208.30px;top:686px;font-size:14px;font-weight:bold;-webkit-text-stroke:0;color:#fff;letter-spacing:0.372px;">2 - Admini</div>
<div style="position:absolute;left:280.0px;top:696px;width:1.7px;height:1.7px;background:#fff"></div>
<div style="position:absolute;left:282.3px;top:696px;width:1.7px;height:1.7px;background:#fff"></div>
<div style="position:absolute;left:284.6px;top:696px;width:1.7px;height:1.7px;background:#fff"></div>
<div class="t" style="left:308.30px;top:686px;font-size:14px;font-weight:bold;-webkit-text-stroke:0;color:#fff;letter-spacing:-0.185px;">2 - Smart L</div>
<div style="position:absolute;left:380.0px;top:696px;width:1.7px;height:1.7px;background:#fff"></div>
<div style="position:absolute;left:382.3px;top:696px;width:1.7px;height:1.7px;background:#fff"></div>
<div style="position:absolute;left:384.6px;top:696px;width:1.7px;height:1.7px;background:#fff"></div>
<div class="t" style="left:408.30px;top:686px;font-size:14px;font-weight:bold;-webkit-text-stroke:0;color:#fff;letter-spacing:-0.185px;">2 - Smart L</div>
<div style="position:absolute;left:480.0px;top:696px;width:1.7px;height:1.7px;background:#fff"></div>
<div style="position:absolute;left:482.3px;top:696px;width:1.7px;height:1.7px;background:#fff"></div>
<div style="position:absolute;left:484.6px;top:696px;width:1.7px;height:1.7px;background:#fff"></div>
<div class="t" style="left:508.30px;top:686px;font-size:14px;font-weight:bold;-webkit-text-stroke:0;color:#fff;letter-spacing:0.000px;">1</div>
<div class="t" style="left:608.30px;top:686px;font-size:14px;font-weight:bold;-webkit-text-stroke:0;color:#fff;letter-spacing:-0.218px;">Abend</div>
<div class="t" style="left:708.30px;top:686px;font-size:14px;font-weight:bold;-webkit-text-stroke:0;color:#fff;letter-spacing:-0.202px;">Jonas</div>
<div class="t" style="left:1108.30px;top:686px;font-size:14px;font-weight:bold;-webkit-text-stroke:0;color:#fff;letter-spacing:-0.122px;">Geschäftsl</div>
<div style="position:absolute;left:1180.0px;top:696px;width:1.7px;height:1.7px;background:#fff"></div>
<div style="position:absolute;left:1182.3px;top:696px;width:1.7px;height:1.7px;background:#fff"></div>
<div style="position:absolute;left:1184.6px;top:696px;width:1.7px;height:1.7px;background:#fff"></div>
<div class="t" style="left:1308.30px;top:686px;font-size:14px;font-weight:bold;-webkit-text-stroke:0;color:#fff;letter-spacing:0.338px;">Rankestra</div>
<div style="position:absolute;left:1380.0px;top:696px;width:1.7px;height:1.7px;background:#fff"></div>
<div style="position:absolute;left:1382.3px;top:696px;width:1.7px;height:1.7px;background:#fff"></div>
<div style="position:absolute;left:1384.6px;top:696px;width:1.7px;height:1.7px;background:#fff"></div>
<div class="t" style="left:1508.30px;top:686px;font-size:14px;font-weight:bold;-webkit-text-stroke:0;color:#fff;letter-spacing:-0.311px;">95</div>
<div class="t" style="left:32.30px;top:724px;font-size:13.5px;color:#3a434d;letter-spacing:0.982px;">true</div>
<div class="t" style="left:108.30px;top:724px;font-size:13.5px;color:#3a434d;letter-spacing:1.164px;">admin</div>
<div class="t" style="left:208.30px;top:724px;font-size:13.5px;color:#3a434d;letter-spacing:0.145px;">1 - Super U</div>
<div style="position:absolute;left:280.0px;top:733px;width:1.4px;height:1.4px;background:#3a434d"></div>
<div style="position:absolute;left:282.3px;top:733px;width:1.4px;height:1.4px;background:#3a434d"></div>
<div style="position:absolute;left:284.6px;top:733px;width:1.4px;height:1.4px;background:#3a434d"></div>
<div class="t" style="left:308.30px;top:724px;font-size:13.5px;color:#3a434d;letter-spacing:0.820px;">1 - Default</div>
<div style="position:absolute;left:380.0px;top:733px;width:1.4px;height:1.4px;background:#3a434d"></div>
<div style="position:absolute;left:382.3px;top:733px;width:1.4px;height:1.4px;background:#3a434d"></div>
<div style="position:absolute;left:384.6px;top:733px;width:1.4px;height:1.4px;background:#3a434d"></div>
<div class="t" style="left:408.30px;top:724px;font-size:13.5px;color:#3a434d;letter-spacing:0.820px;">1 - Default</div>
<div style="position:absolute;left:480.0px;top:733px;width:1.4px;height:1.4px;background:#3a434d"></div>
<div style="position:absolute;left:482.3px;top:733px;width:1.4px;height:1.4px;background:#3a434d"></div>
<div style="position:absolute;left:484.6px;top:733px;width:1.4px;height:1.4px;background:#3a434d"></div>
<div class="t" style="left:508.30px;top:724px;font-size:13.5px;color:#3a434d;letter-spacing:0.000px;">1</div>
<div class="t" style="left:608.30px;top:724px;font-size:13.5px;color:#3a434d;letter-spacing:0.744px;">Administra</div>
<div style="position:absolute;left:680.0px;top:733px;width:1.4px;height:1.4px;background:#3a434d"></div>
<div style="position:absolute;left:682.3px;top:733px;width:1.4px;height:1.4px;background:#3a434d"></div>
<div style="position:absolute;left:684.6px;top:733px;width:1.4px;height:1.4px;background:#3a434d"></div>
<div style="position:absolute;left:1537px;top:638px;width:17px;height:163px;background:#f0f0f0"></div>
<div style="position:absolute;left:1539px;top:655px;width:13px;height:28px;background:#c1c1c1"></div>
<svg style="position:absolute;left:1541px;top:644px" width="9" height="5" viewBox="0 0 9 5"><path d="M0 4.5 H8 L4 0.5 Z" fill="#a3a3a3"/></svg>
<svg style="position:absolute;left:1541px;top:789px" width="9" height="5" viewBox="0 0 9 5"><path d="M0 0.5 H8 L4 4.5 Z" fill="#505050"/></svg>
<div style="position:absolute;left:22px;top:801px;width:1515px;height:16px;background:#f0f0f0"></div>
<div style="position:absolute;left:39px;top:803px;width:853px;height:13px;background:#c1c1c1"></div>
<svg style="position:absolute;left:27px;top:805px" width="6" height="9" viewBox="0 0 6 9"><path d="M5 0.5 V8.5 L0.8 4.5 Z" fill="#a3a3a3"/></svg>
<svg style="position:absolute;left:1527px;top:805px" width="6" height="9" viewBox="0 0 6 9"><path d="M0.8 0.5 V8.5 L5 4.5 Z" fill="#505050"/></svg>
<div style="position:absolute;left:1537px;top:801px;width:17px;height:16px;background:#fff"></div>
<div style="position:absolute;left:22px;top:817px;width:1533px;height:1px;background:#d9d9d9"></div>
<div class="t" style="left:35.80px;top:829px;font-size:13.5px;color:#3a434d;letter-spacing:0.683px;">Zeilen pro Seite</div>
<div style="position:absolute;left:151px;top:823px;width:67px;height:25px;box-sizing:border-box;background:#fafafa;border:1px solid #cfcfcf;border-radius:5px;box-shadow:inset 1px 2px 3px rgba(0,0,0,0.07)"></div>
<div class="t" style="left:159.00px;top:829px;font-size:13.5px;color:#3a434d;letter-spacing:1.000px;">20</div>
<div class="t" style="left:795.20px;top:830px;font-size:13.5px;color:#3a434d;letter-spacing:0.200px;">1 - 3 von 3</div>
<div style="position:absolute;left:1439px;top:823px;width:40px;height:25px;box-sizing:border-box;background:#fafafa;border:1px solid #cfcfcf;border-radius:5px;box-shadow:inset 1px 2px 3px rgba(0,0,0,0.07)"></div>
<div class="t" style="left:1449.40px;top:830px;font-size:13.5px;color:#3a434d;letter-spacing:0.000px;">1</div>
<svg style="position:absolute;left:1490px;top:826px" width="15" height="21" viewBox="0 0 15 21"><path d="M11.5 2.5 L3.5 10.5 L11.5 18.5" fill="none" stroke="#e4e6e9" stroke-width="3.6"/></svg>
<svg style="position:absolute;left:1526px;top:826px" width="15" height="21" viewBox="0 0 15 21"><path d="M3.5 2.5 L11.5 10.5 L3.5 18.5" fill="none" stroke="#e4e6e9" stroke-width="3.6"/></svg>
<div style="position:absolute;left:172.0px;top:49.7px;width:26px;height:26px;border-radius:50%;background:#ea4343;box-shadow:1px 2px 3px rgba(0,0,0,0.35)"></div>
<div class="t" style="left:179.40px;top:54px;font-size:18px;color:#fff;letter-spacing:0.000px;">1</div>
<div style="position:absolute;left:141.2px;top:216.8px;width:26px;height:26px;border-radius:50%;background:#ea4343;box-shadow:1px 2px 3px rgba(0,0,0,0.35)"></div>
<div class="t" style="left:148.60px;top:221px;font-size:18px;color:#fff;letter-spacing:0.000px;">2</div>
<div style="position:absolute;left:433.9px;top:345.9px;width:26px;height:26px;border-radius:50%;background:#ea4343;box-shadow:1px 2px 3px rgba(0,0,0,0.35)"></div>
<div class="t" style="left:441.30px;top:350px;font-size:18px;color:#fff;letter-spacing:0.000px;">3</div>
<div style="position:absolute;left:550.0px;top:820.1px;width:26px;height:26px;border-radius:50%;background:#ea4343;box-shadow:1px 2px 3px rgba(0,0,0,0.35)"></div>
<div class="t" style="left:557.40px;top:824px;font-size:18px;color:#fff;letter-spacing:0.000px;">4</div>
<div style="position:absolute;left:126.8px;top:610.1px;width:26px;height:26px;border-radius:50%;background:#ea4343;box-shadow:1px 2px 3px rgba(0,0,0,0.35)"></div>
<div class="t" style="left:134.20px;top:614px;font-size:18px;color:#fff;letter-spacing:0.000px;">5</div>
<div style="position:absolute;left:755.5px;top:679.6px;width:26px;height:26px;border-radius:50%;background:#ea4343;box-shadow:1px 2px 3px rgba(0,0,0,0.35)"></div>
<div class="t" style="left:762.90px;top:684px;font-size:18px;color:#fff;letter-spacing:0.000px;">6</div>
<div style="position:absolute;left:1531.3px;top:266.9px;width:20px;height:20px;border-radius:50%;background:#ea4343;box-shadow:1px 2px 3px rgba(0,0,0,0.35)"></div>
<div class="t" style="left:1536.53px;top:269px;font-size:15px;color:#fff;letter-spacing:0.000px;">7</div>
<div style="position:absolute;left:727.0px;top:112.0px;width:26px;height:26px;border-radius:50%;background:#ea4343;box-shadow:1px 2px 3px rgba(0,0,0,0.35)"></div>
<div class="t" style="left:734.40px;top:116px;font-size:18px;color:#fff;letter-spacing:0.000px;">8</div>
</body></html>
